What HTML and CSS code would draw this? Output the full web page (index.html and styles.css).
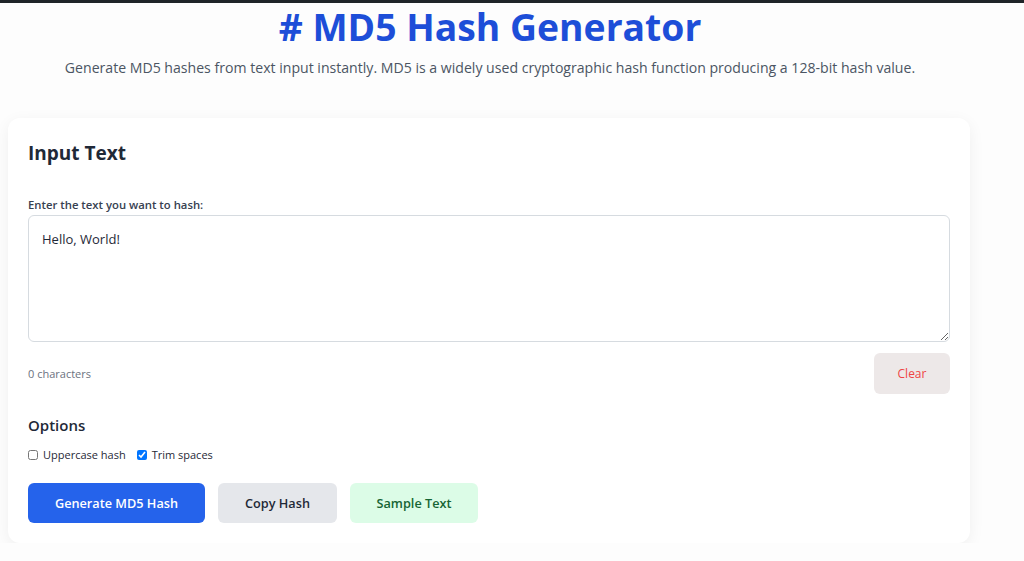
FILE: index.html
```html
<!DOCTYPE html>
<html lang="en">
<head>
    <meta charset="UTF-8">
    <meta name="viewport" content="width=device-width, initial-scale=1.0">
    <title>MD5 Hash Generator</title>
    <link rel="stylesheet" href="styles.css">
</head>
<body>
    <div class="topbar"></div>
    <header class="page-header">
        <h1># MD5 Hash Generator</h1>
        <p class="subtitle">Generate MD5 hashes from text input instantly. MD5 is a widely used cryptographic hash function producing a 128-bit hash value.</p>
    </header>

    <main class="card">
        <h2>Input Text</h2>

        <label class="field-label" for="input-text">Enter the text you want to hash:</label>
        <textarea id="input-text" class="text-input">Hello, World!</textarea>

        <div class="input-meta">
            <span class="char-count">0 characters</span>
            <button class="btn btn-clear">Clear</button>
        </div>

        <h3>Options</h3>
        <div class="options">
            <label class="option"><input type="checkbox"> Uppercase hash</label>
            <label class="option"><input type="checkbox" checked> Trim spaces</label>
        </div>

        <div class="actions">
            <button class="btn btn-primary">Generate MD5 Hash</button>
            <button class="btn btn-secondary">Copy Hash</button>
            <button class="btn btn-sample">Sample Text</button>
        </div>
    </main>
</body>
</html>
```

FILE: styles.css
```css
body {
    font-family: 'Open Sans', 'Noto Sans', sans-serif;
    margin: 0;
    color: #1f2937;
    background-color: #fdfdfd;
}
.topbar {
    height: 3px;
    background-color: #1f2428;
}
.page-header {
    width: 980px;
    text-align: center;
}
h1 {
    margin: 0;
    padding-top: 2px;
    font-size: 37.3px;
    line-height: 44px;
    color: #1d4ed8;
    font-weight: 700;
}
.subtitle {
    margin: 9px 0 0;
    font-size: 14.1px;
    color: #4b5563;
}
.card {
    width: 922px;
    margin: 41px 0 0 8px;
    padding: 20px;
    background-color: #fff;
    border-radius: 12px;
    box-shadow: 0 4px 16px rgba(0, 0, 0, 0.06);
}
h2 {
    margin: 2px 0 0;
    font-size: 19px;
    line-height: 26px;
    font-weight: 700;
    color: #1f2937;
}
.field-label {
    display: block;
    margin-top: 31px;
    font-size: 11.3px;
    font-weight: 600;
    color: #374151;
}
.text-input {
    display: block;
    box-sizing: border-box;
    width: 100%;
    height: 127px;
    margin-top: 3px;
    padding: 14px 13px;
    border: 1px solid #d6dbe0;
    border-radius: 6px;
    font-family: inherit;
    font-size: 13px;
    color: #1f2937;
    resize: vertical;
}
.input-meta {
    display: flex;
    justify-content: space-between;
    align-items: center;
    margin-top: 11px;
}
.char-count {
    font-size: 11px;
    color: #6b7280;
}
h3 {
    margin: 21px 0 0;
    font-size: 15px;
    font-weight: 600;
    color: #1f2937;
}
.options {
    display: flex;
    gap: 11px;
    margin-top: 12px;
}
.option {
    display: flex;
    align-items: center;
    gap: 3px;
    font-size: 11px;
    color: #1f2937;
}
.option input {
    width: 10px;
    height: 10px;
    margin: 0 2px 0 0;
}
.actions {
    display: flex;
    gap: 13px;
    margin-top: 21px;
}
.btn {
    height: 40px;
    border: none;
    border-radius: 6px;
    font-family: inherit;
    font-size: 12.7px;
    font-weight: 600;
    padding: 0;
    cursor: pointer;
}
.btn-clear {
    height: 41px;
    width: 76px;
    background-color: #ede8e8;
    color: #ef4444;
    font-size: 12px;
    font-weight: 500;
}
.btn-primary {
    width: 177px;
    background-color: #2563eb;
    color: #fff;
}
.btn-secondary {
    width: 119px;
    background-color: #e5e7eb;
    color: #1f2937;
}
.btn-sample {
    width: 128px;
    background-color: #dcfce7;
    color: #166534;
}
```
